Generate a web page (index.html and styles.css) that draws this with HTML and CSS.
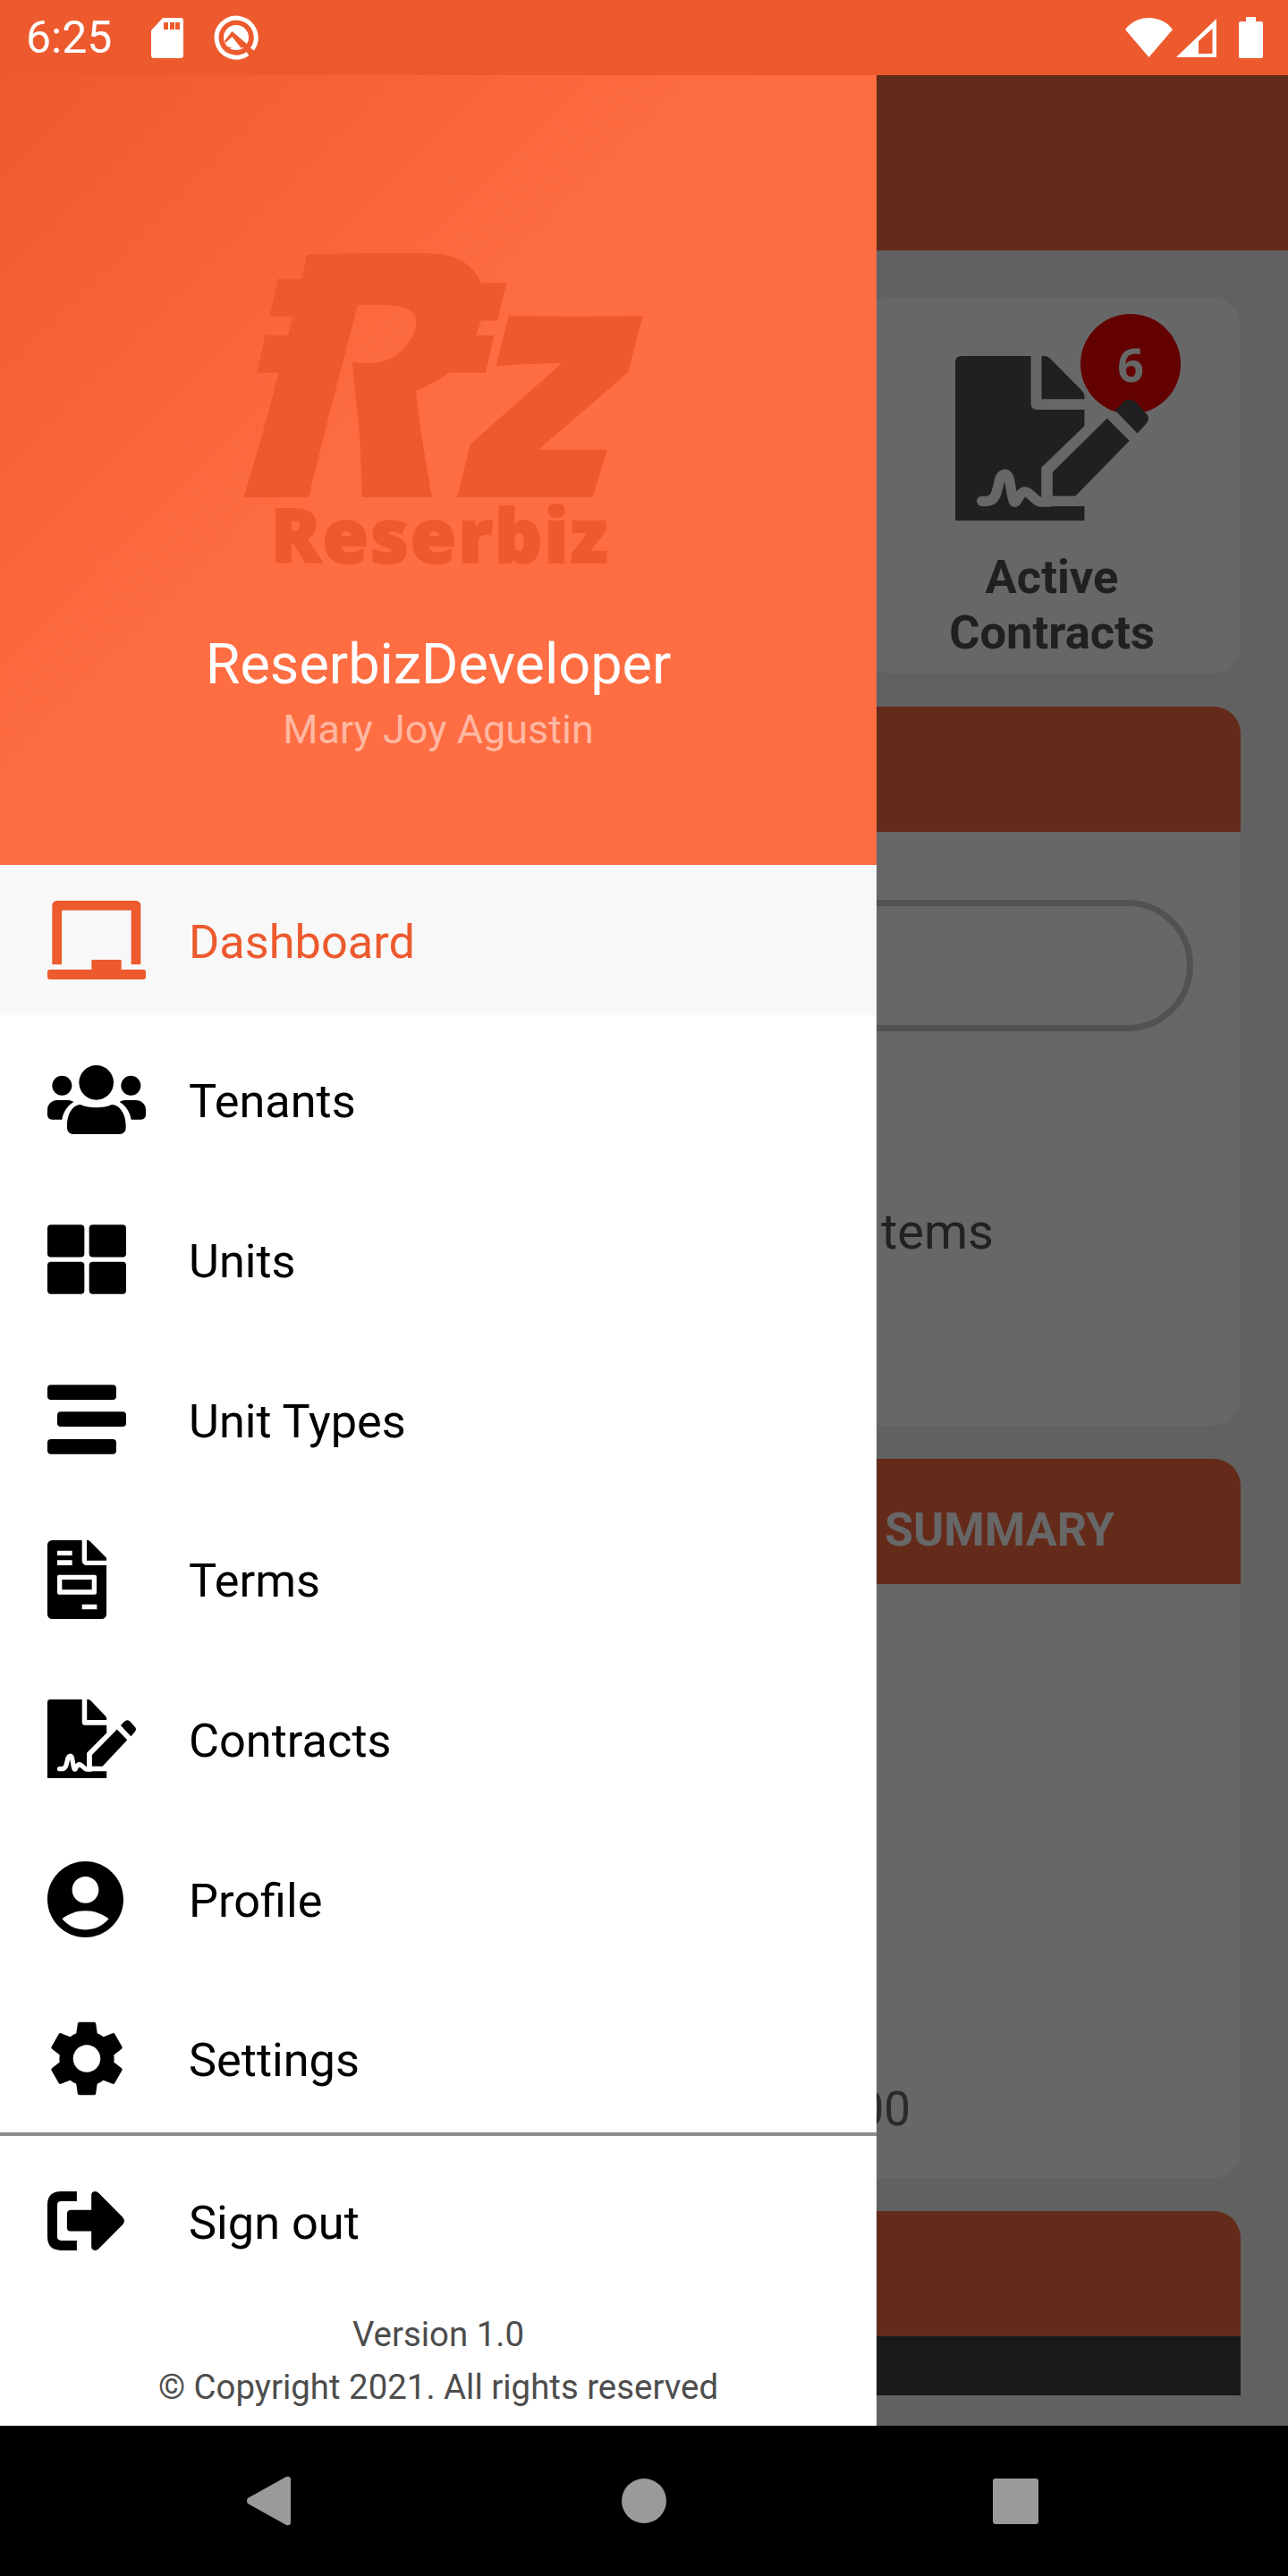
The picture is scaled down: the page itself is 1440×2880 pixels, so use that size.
FILE: index.html
```html
<!DOCTYPE html>
<html lang="en">

<head>
  <meta charset="UTF-8">
  <meta name="viewport" content="width=device-width, initial-scale=1.0">
  <title>Reserbiz</title>
  <link rel="stylesheet" href="styles.css">
</head>

<body>
  <svg class="defs" width="0" height="0">
    <symbol id="contract" viewBox="323 295 649 553" preserveAspectRatio="none">
      <path d="M345 295H577V455Q577 475 597 475H757V530L612 670V800H757V848H323V317Q323 295 345 295Z" />
      <path d="M613 295H622Q635 295 645 307L745 408Q757 420 757 430V440H613Z" />
      <path d="M650 685L833 505L908 580L727 765H650Z" />
      <path d="M860 478L885 452Q905 432 930 450L962 485Q982 505 962 525L935 555Z" />
      <path class="sig" d="M412 783H425C455 783 460 765 470 720C475 690 497 685 503 705C510 730 515 785 522 785C530 790 535 760 552 752C575 748 590 785 610 785H640" />
    </symbol>
  </svg>

  <div class="phone">
    <div class="status">
      <span class="time">6:25</span>
      <svg class="ic-sd" width="36" height="45" viewBox="0 0 36 45">
        <path fill-rule="evenodd" d="M13 0H33a3 3 0 0 1 3 3V42a3 3 0 0 1-3 3H3a3 3 0 0 1-3-3V14ZM14 5v8h5V5ZM21 5v8h5V5ZM27 5v8h5V5Z" />
      </svg>
      <svg class="ic-q" width="50" height="50" viewBox="0 0 50 50">
        <path class="q-ring" d="M43 38A22 22 0 1 0 38 43" />
        <circle cx="25" cy="25" r="14" />
        <path class="q-cut" d="M20.5 18L12 29L17 37L36 36L38 33Z" />
        <path d="M20.5 24L30 36C25 38 20 38 15 34L13 31Z" />
      </svg>
      <div class="status-right">
        <svg width="53" height="44" viewBox="0 0 53 44">
          <path d="M0 13C6 5 15 0 26.5 0S47 5 53 13L26.5 44Z" />
        </svg>
        <svg width="45" height="43" viewBox="0 0 45 43">
          <path fill-rule="evenodd" d="M45 0V43H0ZM40.5 11L25 25V39H40.5Z" />
        </svg>
        <svg class="ic-batt" width="27" height="46" viewBox="0 0 27 46">
          <path d="M8 0H19V5H25a2 2 0 0 1 2 2V44a2 2 0 0 1-2 2H2a2 2 0 0 1-2-2V7a2 2 0 0 1 2-2H8Z" />
        </svg>
      </div>
    </div>

    <div class="main">
      <!-- page behind the drawer -->
      <div class="behind">
        <div class="appbar"></div>
        <div class="content">
          <div class="stats">
            <div class="stat"></div>
            <div class="stat"></div>
            <div class="stat">
              <div class="stat-icon">
                <svg class="stat-svg" width="216" height="184"><use href="#contract" /></svg>
                <span class="badge">6</span>
              </div>
              <div class="stat-label">Active<br>Contracts</div>
            </div>
          </div>

          <div class="section">
            <div class="section-head"></div>
            <div class="section-body search-body">
              <div class="pill"></div>
              <div class="items">Items</div>
            </div>
          </div>

          <div class="section">
            <div class="section-head"><span>SUMMARY</span></div>
            <div class="section-body">
              <div class="amount">00</div>
            </div>
          </div>

          <div class="section last">
            <div class="section-head"></div>
            <div class="strip"></div>
          </div>
        </div>
      </div>

      <!-- drawer -->
      <div class="drawer">
        <div class="drawer-head">
          <svg class="mark" width="447" height="273" viewBox="157 68 1341 820">
            <path d="M370 72C480 72 580 66 680 68C730 68 780 68 820 72C880 80 930 110 955 168H1040L1010 295H955L938 344H998L970 470H846C810 495 775 515 737 530C745 640 770 770 790 888H555C552 800 550 720 545 660C535 580 530 500 522 434C600 445 660 430 695 390C725 355 740 320 735 290C725 245 670 238 540 243C500 400 420 700 376 888H157C200 750 240 610 275 470H202L230 344H307L322 281H245L272 154H352Z" />
            <path d="M1047 279C1200 281 1350 281 1498 279L1447 470L1148 727C1230 729 1300 729 1378 727L1330 888H874L918 710L1225 438C1150 438 1070 442 1005 447Z" />
          </svg>
          <div class="wordmark">Reserbiz</div>
          <div class="head-name">ReserbizDeveloper</div>
          <div class="head-user">Mary Joy Agustin</div>
        </div>

        <div class="menu">
          <div class="row active">
            <div class="row-icon">
              <svg width="110" height="88" viewBox="159 141 330 264">
                <path d="M175 355V157a16 16 0 0 1 16-16H456a16 16 0 0 1 16 16V355H440V173H207V355Z" />
                <rect x="159" y="372" width="330" height="33" rx="8" />
                <rect x="307" y="339" width="100" height="34" />
              </svg>
            </div>
            <span>Dashboard</span>
          </div>
          <div class="row">
            <div class="row-icon">
              <svg width="110" height="77" viewBox="159 693 330 231">
                <circle cx="323" cy="751" r="58" />
                <circle cx="208" cy="761" r="33" />
                <circle cx="439" cy="761" r="33" />
                <path d="M225 895C225 855 245 825 270 825C300 838 345 838 375 825C400 825 422 855 422 895V904a20 20 0 0 1-20 20H245a20 20 0 0 1-20-20Z" />
                <path d="M159 843C159 822 175 810 192 810H225C233 810 240 812 247 816C225 830 212 850 208 875H175C165 875 159 868 159 859Z" />
                <path d="M489 843C489 822 473 810 456 810H423C415 810 408 812 401 816C423 830 436 850 440 875H473C483 875 489 868 489 859Z" />
              </svg>
            </div>
            <span>Tenants</span>
          </div>
          <div class="row">
            <div class="row-icon">
              <svg width="88" height="78" viewBox="159 330 264 233">
                <rect x="159" y="330" width="124" height="109" rx="12" />
                <rect x="299" y="330" width="124" height="109" rx="12" />
                <rect x="159" y="455" width="124" height="108" rx="12" />
                <rect x="299" y="455" width="124" height="108" rx="12" />
              </svg>
            </div>
            <span>Units</span>
          </div>
          <div class="row">
            <div class="row-icon">
              <svg width="88" height="78" viewBox="69 58 264 232">
                <rect x="69" y="58" width="231" height="50" rx="12" />
                <rect x="102" y="148" width="231" height="50" rx="12" />
                <rect x="69" y="240" width="231" height="50" rx="12" />
              </svg>
            </div>
            <span>Unit Types</span>
          </div>
          <div class="row">
            <div class="row-icon">
              <svg width="66" height="88" viewBox="159 128 198 264">
                <path fill-rule="evenodd" d="M175 128H275V196a16 16 0 0 0 16 16H357V376a16 16 0 0 1-16 16H175a16 16 0 0 1-16-16V144a16 16 0 0 1 16-16ZM192 163V179H242V163ZM192 195V212H242V195ZM275 343V360H325V343ZM198 244a6 6 0 0 0-6 6V304a6 6 0 0 0 6 6H318a6 6 0 0 0 6-6V250a6 6 0 0 0-6-6ZM208 260H308V294H208Z" />
                <path d="M291 128h3a10 10 0 0 1 8 4L352 182a10 10 0 0 1 5 10v4H291Z" />
              </svg>
            </div>
            <span>Terms</span>
          </div>
          <div class="row">
            <div class="row-icon">
              <svg width="99" height="88"><use href="#contract" /></svg>
            </div>
            <span>Contracts</span>
          </div>
          <div class="row">
            <div class="row-icon">
              <svg width="85" height="85" viewBox="2 2 20 20">
                <path d="M12 2C6.48 2 2 6.48 2 12s4.48 10 10 10 10-4.48 10-10S17.52 2 12 2zm0 4c1.93 0 3.5 1.57 3.5 3.5S13.93 13 12 13s-3.5-1.57-3.5-3.5S10.07 6 12 6zm0 14c-2.03 0-4.43-.82-6.14-2.88C7.55 15.8 9.68 15 12 15s4.45.8 6.14 2.12C16.43 19.18 14.03 20 12 20z" />
              </svg>
            </div>
            <span>Profile</span>
          </div>
          <div class="row">
            <div class="row-icon">
              <svg class="ic-gear" width="82" height="85" viewBox="2.6 2 18.8 20">
                <path d="M19.14 12.94c.04-.3.06-.61.06-.94 0-.32-.02-.64-.07-.94l2.03-1.58c.18-.14.23-.41.12-.61l-1.92-3.32c-.12-.22-.37-.29-.59-.22l-2.39.96c-.5-.38-1.03-.7-1.62-.94l-.36-2.54c-.04-.24-.24-.41-.48-.41h-3.84c-.24 0-.43.17-.47.41l-.36 2.54c-.59.24-1.13.57-1.62.94l-2.39-.96c-.22-.08-.47 0-.59.22L2.74 8.87c-.12.21-.08.47.12.61l2.03 1.58c-.05.3-.09.63-.09.94s.02.64.07.94l-2.03 1.58c-.18.14-.23.41-.12.61l1.92 3.32c.12.22.37.29.59.22l2.39-.96c.5.38 1.03.7 1.62.94l.36 2.54c.05.24.24.41.48.41h3.84c.24 0 .44-.17.47-.41l.36-2.54c.59-.24 1.13-.56 1.62-.94l2.39.96c.22.08.47 0 .59-.22l1.92-3.32c.12-.22.07-.47-.12-.61l-2.01-1.58zM12 15.6c-1.98 0-3.6-1.62-3.6-3.6s1.62-3.6 3.6-3.6 3.6 1.62 3.6 3.6-1.62 3.6-3.6 3.6z" />
              </svg>
            </div>
            <span>Settings</span>
          </div>
        </div>

        <div class="divider"></div>

        <div class="row signout">
          <div class="row-icon">
            <svg width="88" height="66" viewBox="159 810 265 198">
              <path d="M258 810H205Q159 810 159 856V962Q159 1008 205 1008H258V975H205Q192 975 192 962V856Q192 843 205 843H258Z" />
              <path d="M225 885Q225 872 240 872H307V822Q307 810 320 810Q326 810 332 816L412 896Q424 909 412 922L332 1002Q326 1008 320 1008Q307 1008 307 995V944H240Q225 944 225 932Z" />
            </svg>
          </div>
          <span>Sign out</span>
        </div>

        <div class="foot">
          <div>Version 1.0</div>
          <div>© Copyright 2021. All rights reserved</div>
        </div>
      </div>
    </div>

    <div class="nav">
      <svg class="nav-back" width="49" height="56" viewBox="0 0 49 56">
        <path d="M1 25L44 1Q49 0 49 4V52Q49 56 44 55L1 31Q-1 28 1 25Z" />
      </svg>
      <div class="nav-home"></div>
      <div class="nav-recent"></div>
    </div>
  </div>
</body>

</html>
```

FILE: styles.css
```css
* {
  box-sizing: border-box;
}

body {
  margin: 0;
  font-family: Roboto, "Liberation Sans", sans-serif;
}

.defs {
  position: absolute;
}

.phone {
  width: 1440px;
  height: 2880px;
  display: flex;
  flex-direction: column;
  overflow: hidden;
}

/* status bar */
.status {
  height: 84px;
  flex: none;
  display: flex;
  align-items: center;
  padding: 0 28px 0 29px;
  background: #ed5a2e;
  color: #fff;
}

.status svg {
  fill: #fff;
}

.time {
  font-size: 50px;
  width: 140px;
}

.ic-q {
  margin-left: 34px;
}

.ic-q .q-ring {
  fill: none;
  stroke: #fff;
  stroke-width: 5;
}

.ic-q .q-cut {
  fill: #ed5a2e;
}

.status-right {
  margin-left: auto;
  display: flex;
  align-items: center;
  gap: 4px;
}

.ic-batt {
  margin-left: 21px;
}

/* page behind */
.main {
  flex: 1;
  position: relative;
  overflow: hidden;
  background: #616161;
}

.appbar {
  height: 196px;
  background: #642b1b;
}

.content {
  padding: 53px 53px 0;
}

.stats {
  display: grid;
  grid-template-columns: repeat(3, 422px);
  gap: 34px;
}

.stat {
  height: 420px;
  border-radius: 30px;
  background: #676767;
  padding-top: 65px;
  display: flex;
  flex-direction: column;
  align-items: center;
}

.stat-icon {
  position: relative;
  width: 216px;
  height: 184px;
}

.stat-svg {
  position: relative;
  z-index: 1;
  display: block;
  fill: #202020;
  --cut: #676767;
}

.badge {
  position: absolute;
  left: 140px;
  top: -47px;
  width: 112px;
  height: 112px;
  border-radius: 50%;
  background: #630000;
  color: #676767;
  font-family: "Open Sans", sans-serif;
  font-weight: 700;
  font-size: 52px;
  line-height: 112px;
  text-align: center;
}

.stat-label {
  margin-top: 32px;
  font-size: 52.5px;
  font-weight: 700;
  line-height: 62px;
  text-align: center;
  color: #202020;
}

.sig {
  fill: none;
  stroke: var(--cut);
  stroke-width: 34;
  stroke-linecap: round;
  stroke-linejoin: round;
}

.section {
  margin-top: 37px;
  border-radius: 30px;
  background: #676767;
  overflow: hidden;
}

.section-head {
  height: 140px;
  background: #642b1b;
  display: flex;
  justify-content: flex-end;
  padding: 18px 141px 0 0;
  align-items: center;
  font-size: 52px;
  font-weight: 700;
  color: #676767;
}

.section-body {
  height: 664px;
}

.search-body {
  padding-top: 76px;
}

.section.last {
  background: none;
  border-radius: 30px 30px 0 0;
}

.strip {
  height: 66px;
  background: #1a1a1a;
}

.pill {
  margin: 0 53px;
  height: 147px;
  border: 7px solid #525252;
  border-radius: 74px;
}

.items {
  margin-top: 191px;
  padding-right: 276px;
  text-align: right;
  font-size: 56px;
  color: #222;
}

.amount {
  padding: 556px 369px 0 0;
  text-align: right;
  font-size: 53px;
  color: #2a2a2a;
}

/* drawer */
.drawer {
  position: absolute;
  left: 0;
  top: 0;
  bottom: 0;
  width: 980px;
  background: #fff;
  display: flex;
  flex-direction: column;
}

.drawer-head {
  height: 883px;
  flex: none;
  padding-top: 199px;
  display: flex;
  flex-direction: column;
  align-items: center;
  background: linear-gradient(135deg, #ec5a2e 0, #ff6d42 47%);
}

.mark {
  display: block;
  flex: none;
  fill: #ec5a2e;
  margin-left: 11px;
}

.wordmark {
  margin-left: 4px;
  font-family: "Open Sans", sans-serif;
  font-weight: 800;
  font-size: 83px;
  letter-spacing: 2px;
  line-height: 81px;
  color: #ec5a2e;
  -webkit-text-stroke: 2px #ec5a2e;
}

.head-name {
  margin-top: 69px;
  font-size: 63px;
  color: #fff;
}

.head-user {
  margin-top: 10px;
  font-size: 45px;
  color: #ffb8a3;
}

.menu {
  height: 1417px;
  flex: none;
  display: flex;
  flex-direction: column;
  gap: 10.7px;
}

.row {
  height: 168px;
  flex: none;
  display: flex;
  align-items: center;
  padding-left: 53px;
  font-size: 52.3px;
  color: #000;
}

.row span {
  padding-top: 3px;
}

.row svg {
  display: block;
  fill: #000;
  --cut: #fff;
}

.row.active {
  background: #f8f8f8;
  color: #ec5a2e;
}

.row.active svg {
  fill: #ec5a2e;
}

.row-icon {
  width: 158px;
  flex: none;
}

.ic-gear {
  margin-left: 3px;
}

.divider {
  height: 4px;
  flex: none;
  background: #8c8c8c;
}

.signout {
  height: 190px;
}

.foot {
  flex: 1;
  padding-top: 2px;
  text-align: center;
  font-size: 38.4px;
  line-height: 59px;
  color: #4d4d4d;
}

/* nav bar */
.nav {
  height: 168px;
  flex: none;
  background: #000;
  display: flex;
  align-items: center;
  padding-left: 276px;
}

.nav-back {
  fill: #9a9a9a;
  margin-right: 370px;
}

.nav-home {
  width: 50px;
  height: 50px;
  border-radius: 50%;
  background: #9a9a9a;
  margin-right: 365px;
}

.nav-recent {
  width: 51px;
  height: 51px;
  border-radius: 3px;
  background: #9a9a9a;
}
```
